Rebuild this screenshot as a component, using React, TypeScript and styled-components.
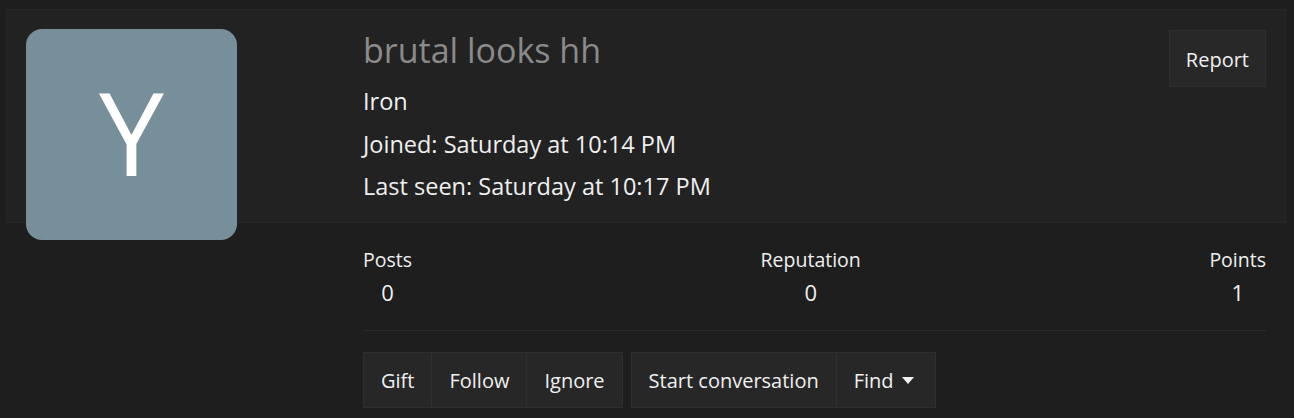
import React from 'react';
import styled, { createGlobalStyle } from 'styled-components';

const GlobalStyle = createGlobalStyle`
  html, body {
    margin: 0;
    padding: 0;
    background: #1e1e1e;
  }
  body {
    font-family: 'Open Sans', 'Noto Sans', 'Liberation Sans', sans-serif;
    color: #ececec;
  }
`;

type Stat = { label: string; value: string };

const stats: Stat[] = [
  { label: 'Posts', value: '0' },
  { label: 'Reputation', value: '0' },
  { label: 'Points', value: '1' },
];

const App = () => {
  return (
    <Page>
      <GlobalStyle />
      <Header>
        <AvatarCol>
          <Avatar>Y</Avatar>
        </AvatarCol>
        <Info>
          <Name>brutal looks hh</Name>
          <InfoLine>Iron</InfoLine>
          <InfoLine>Joined: Saturday at 10:14 PM</InfoLine>
          <InfoLine>Last seen: Saturday at 10:17 PM</InfoLine>
        </Info>
        <ReportButton>Report</ReportButton>
      </Header>
      <Body>
        <Stats>
          {stats.map((s) => (
            <StatItem key={s.label}>
              <StatLabel>{s.label}</StatLabel>
              <StatValue>{s.value}</StatValue>
            </StatItem>
          ))}
        </Stats>
        <Divider />
        <Actions>
          <ButtonGroup>
            <ActionButton>Gift</ActionButton>
            <ActionButton>Follow</ActionButton>
            <ActionButton>Ignore</ActionButton>
          </ButtonGroup>
          <ButtonGroup>
            <ActionButton>Start conversation</ActionButton>
            <ActionButton $menu>
              Find
              <Caret viewBox="0 0 12 7">
                <path d="M0 0h12L6 7z" fill="#f2f2f2" />
              </Caret>
            </ActionButton>
          </ButtonGroup>
        </Actions>
      </Body>
    </Page>
  );
};

export default App;

const Page = styled.div`
  padding: 9px 8px 0 6px;
`;

const Header = styled.div`
  display: flex;
  align-items: flex-start;
  box-sizing: border-box;
  height: 214px;
  padding: 19px 19px 0 19px;
  background: #222222;
  border: 1px solid #262626;
`;

const AvatarCol = styled.div`
  flex: 0 0 211px;
  height: 174px;
  margin-right: 126px;
`;

const Avatar = styled.div`
  box-sizing: border-box;
  width: 211px;
  height: 211px;
  padding-bottom: 7px;
  border-radius: 16px;
  background: #778f9b;
  color: #ffffff;
  display: flex;
  align-items: center;
  justify-content: center;
  font-size: 116px;
  line-height: 1;
  position: relative;
  z-index: 1;
`;

const Info = styled.div`
  flex: 1;
  display: flex;
  flex-direction: column;
  margin-top: -1px;
`;

const Name = styled.h1`
  margin: 0 0 8px 0;
  font-size: 34px;
  font-weight: 400;
  line-height: 44px;
  color: #8a8a8a;
`;

const InfoLine = styled.div`
  font-size: 23.5px;
  line-height: 42.5px;
  color: #f0f0f0;
`;

const ReportButton = styled.button`
  flex: 0 0 auto;
  height: 57px;
  padding: 2px 16px 0 16px;
  margin-top: 1px;
  background: #282828;
  border: 1px solid #2e2e2e;
  color: #f0f0f0;
  font-family: inherit;
  font-size: 20px;
`;

const Body = styled.div`
  padding: 0 20px 0 357px;
`;

const Stats = styled.div`
  display: flex;
  justify-content: space-between;
  padding-top: 25px;
`;

const StatItem = styled.div`
  display: flex;
  flex-direction: column;
  align-items: center;
`;

const StatLabel = styled.div`
  font-size: 19.5px;
  line-height: 24px;
  color: #f0f0f0;
`;

const StatValue = styled.div`
  margin-top: 3px;
  font-size: 22px;
  line-height: 34px;
  color: #f0f0f0;
`;

const Divider = styled.div`
  height: 1px;
  background: #2b2b2b;
  margin-top: 21px;
`;

const Actions = styled.div`
  display: flex;
  gap: 8px;
  margin-top: 21px;
`;

const ButtonGroup = styled.div`
  display: flex;
  border: 1px solid #2f2f2f;
  background: #272727;
`;

const ActionButton = styled.button<{ $menu?: boolean }>`
  display: flex;
  align-items: center;
  gap: 8px;
  height: 54px;
  padding: 0 ${({ $menu }) => ($menu ? '21px' : '17px')} 0 17px;
  background: transparent;
  border: none;
  border-left: 1px solid #2f2f2f;
  color: #f0f0f0;
  font-family: inherit;
  font-size: 20px;
  &:first-child {
    border-left: none;
  }
`;

const Caret = styled.svg`
  width: 12px;
  height: 7px;
`;
